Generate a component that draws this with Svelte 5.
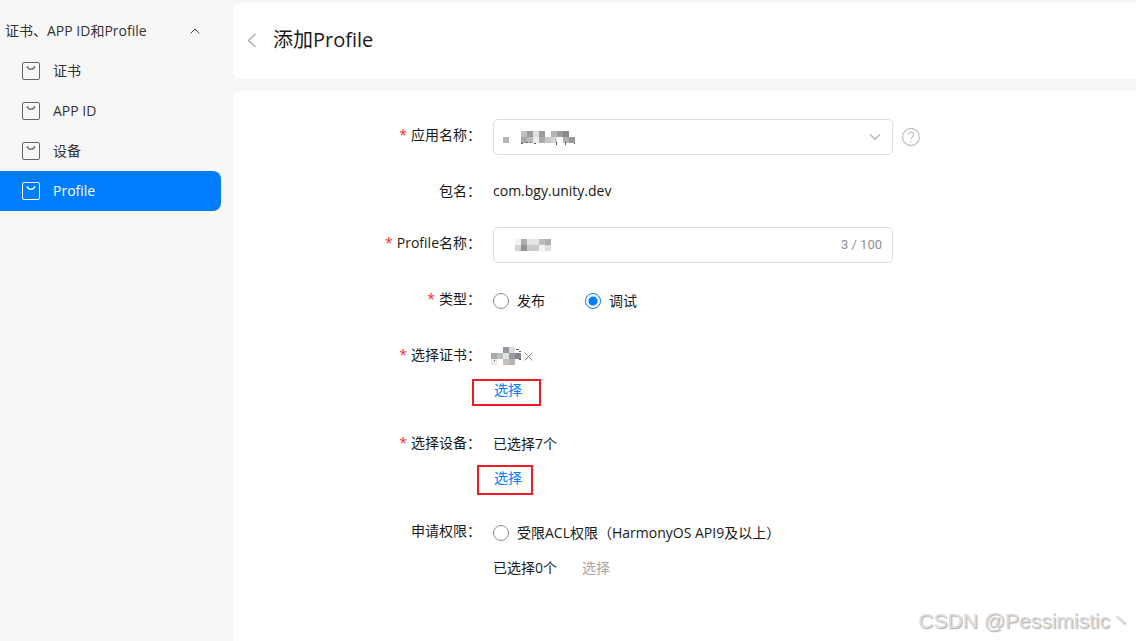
<script>
  const navItems = ['证书', 'APP ID', '设备', 'Profile'];
  let active = $state('Profile');
  let open = $state(true);

  let type = $state('debug');
  let profileName = $state('');
  let certVisible = $state(true);

  // masked values: [x, y, shade], one cell is 6px
  const appMask = [
    [0, 1, '#b8b8b8'],
    [3, 0, '#c0c0c0'], [4, 0, '#9a9a9a'], [5, 0, '#dedede'], [6, 0, '#9a9a9a'],
    [8, 0, '#b5b5b5'], [9, 0, '#9c9c9c'], [10, 0, '#888888'],
    [3, 1, '#a6a6a6'], [4, 1, '#b9b9b9'], [5, 1, '#ebebeb'], [6, 1, '#a9a9a9'],
    [7, 1, '#c8c8c8'], [8, 1, '#d2d2d2'], [10, 1, '#b0b0b0'], [11, 1, '#9a9a9a'],
  ];
  const nameMask = [
    [0, 0, '#f3f3f3'], [1, 0, '#adadad'], [2, 0, '#e6e6e6'], [3, 0, '#e6e6e6'],
    [4, 0, '#bcbcbc'], [5, 0, '#adadad'],
    [0, 1, '#d3d3d3'], [1, 1, '#939393'], [2, 1, '#c9c9c9'], [3, 1, '#cccccc'],
    [4, 1, '#f3f3f3'], [5, 1, '#dedede'],
  ];
  const certMask = [
    [0, 1, '#a9a9a9'], [1, 1, '#bcbcbc'], [2, 1, '#d5e5e0'], [3, 1, '#a096a6'], [4, 1, '#858585'],
    [2, 0, '#9c92a4'], [3, 0, '#d9dedb'],
    [0, 2, '#f1e8e8'], [2, 2, '#c9beb8'], [3, 2, '#b3b3b3'],
  ];

  // bits of the text that stick out of the mask: [x, y, w, h]
  const appBits = [
    [18, 12, 2, 1], [23, 11, 2, 1], [27, 11, 1, 1], [31, 12, 2, 1],
    [53, 11, 1, 3], [62, 11, 1, 3], [71, 12, 1, 1],
  ];
  const certBits = [[3, 13, 1, 1], [25, 2, 3, 1], [28, 4, 2, 1], [28, 12, 2, 1]];
</script>

{#snippet mask(cells, cols, rows, bits = [])}
  <svg class="mask" width={cols * 6} height={rows * 6} shape-rendering="crispEdges" aria-hidden="true">
    {#each cells as [x, y, fill]}
      <rect x={x * 6} y={y * 6} width="6" height="6" {fill} />
    {/each}
    {#each bits as [x, y, width, height]}
      <rect {x} {y} {width} {height} fill="#555" />
    {/each}
  </svg>
{/snippet}

<div class="page">
  <aside class="sidebar">
    <button class="group" type="button" aria-expanded={open} onclick={() => (open = !open)}>
      <span>证书、APP ID和Profile</span>
      <svg class:closed={!open} width="12" height="8" viewBox="0 0 12 8" fill="none" stroke="#444">
        <path d="M1.5 6.5 6 2l4.500 4.500" />
      </svg>
    </button>
    {#if open}
      <nav>
        {#each navItems as item}
          <a href="#{item}" class="nav-item" class:active={active === item} onclick={() => (active = item)}>
            <svg width="18" height="18" viewBox="0 0 18 18" fill="none" stroke="currentColor">
              <rect x="0.500" y="0.500" width="17" height="17" rx="1.500" />
              <path d="M5 4.200C5.700 6 7.200 7.300 9 7.300S12.300 6 13 4.200" stroke-width="1.300" />
            </svg>
            <span>{item}</span>
          </a>
        {/each}
      </nav>
    {/if}
  </aside>

  <main>
    <header class="panel title-bar">
      <button class="back" type="button" aria-label="返回">
        <svg width="10" height="16" viewBox="0 0 10 16" fill="none" stroke="#a8a8a8" stroke-width="1.300">
          <path d="M8.500 1 1.500 7.500l7 6.500" />
        </svg>
      </button>
      <h1>添加Profile</h1>
    </header>

    <form class="panel form" onsubmit={(e) => e.preventDefault()}>
      <div class="row">
        <label class="label required" for="app">应用名称：</label>
        <div class="field">
          <div class="control">
            <select id="app"><option></option></select>
            <span class="app-value">{@render mask(appMask, 12, 2, appBits)}</span>
            <svg class="arrow" width="12" height="8" viewBox="0 0 12 8" fill="none" stroke="#b0b1b8" stroke-width="1.200">
              <path d="M1 1.500 6 6.300l5-4.800" />
            </svg>
          </div>
          <button class="help" type="button" aria-label="帮助">
            <svg width="20" height="20" viewBox="0 0 20 20" fill="none" stroke="#c6c6c6" stroke-width="1.300">
              <circle cx="10" cy="10" r="8.500" />
              <path d="M7.300 7.800a2.700 2.700 0 1 1 4.300 2.100c-1 .8-1.600 1.200-1.600 2.500" />
              <path d="M10 13.900v1.400" />
            </svg>
          </button>
        </div>
      </div>

      <div class="row">
        <span class="label">包名：</span>
        <div class="package">com.bgy.unity.dev</div>
      </div>

      <div class="row">
        <label class="label required" for="profile-name">Profile名称：</label>
        <div class="field">
          <div class="control">
            <input id="profile-name" type="text" maxlength="100" bind:value={profileName} />
            <span class="name-value">{@render mask(nameMask, 6, 2)}</span>
            <span class="count">3 / 100</span>
          </div>
        </div>
      </div>

      <div class="row" role="radiogroup" aria-labelledby="type-label">
        <span class="label required" id="type-label">类型：</span>
        <div class="field radios">
          <label class="radio"><input type="radio" name="type" value="release" bind:group={type} />发布</label>
          <label class="radio"><input type="radio" name="type" value="debug" bind:group={type} />调试</label>
        </div>
      </div>

      <div class="row">
        <span class="label required">选择证书：</span>
        <div>
          <div class="line tag">
            {#if certVisible}
              {@render mask(certMask, 5, 3, certBits)}
              <button class="remove" type="button" aria-label="移除" onclick={() => (certVisible = false)}>
                <svg width="9" height="9" viewBox="0 0 9 9" stroke="#8f9096">
                  <path d="M.5.5l8 8M8.500.5l-8 8" />
                </svg>
              </button>
            {/if}
          </div>
          <div class="line">
            <button class="link marked cert" type="button">选择</button>
          </div>
        </div>
      </div>

      <div class="row">
        <span class="label required">选择设备：</span>
        <div>
          <div class="line">已选择7个</div>
          <div class="line">
            <button class="link marked device" type="button">选择</button>
          </div>
        </div>
      </div>

      <div class="row">
        <span class="label">申请权限：</span>
        <div>
          <div class="field">
            <label class="radio"><input type="radio" name="acl" value="acl" />受限ACL权限（HarmonyOS API9及以上）</label>
          </div>
          <div class="line picked">
            <span>已选择0个</span>
            <button class="link" type="button" disabled>选择</button>
          </div>
        </div>
      </div>
    </form>
  </main>

  <div class="watermark">CSDN @Pessimistic丶</div>
</div>

<style>
  :global(body) {
    margin: 0;
    background: #f7f7f7;
  }

  .page {
    display: flex;
    gap: 12px;
    position: relative;
    min-height: 100vh;
    box-sizing: border-box;
    padding-top: 3px;
    color: #191919;
    font-family: 'Open Sans', 'Noto Sans CJK SC', sans-serif;
    font-size: 14px;
    line-height: 20px;
  }

  button,
  input,
  select {
    font: inherit;
    color: inherit;
  }

  button {
    padding: 0;
    border: 0;
    background: none;
    cursor: pointer;
  }

  svg {
    display: block;
    flex: none;
  }

  .sidebar {
    flex: none;
    width: 221px;
    padding-top: 8px;
    box-sizing: border-box;
    color: #333;
  }

  .group {
    display: flex;
    align-items: center;
    justify-content: space-between;
    width: 100%;
    height: 40px;
    padding: 0 20px 0 5px;
  }

  .closed {
    transform: rotate(180deg);
  }

  .nav-item {
    display: flex;
    align-items: center;
    gap: 13px;
    height: 40px;
    padding-left: 22px;
    border-radius: 0 8px 8px 0;
    color: #333;
    text-decoration: none;
  }

  .nav-item svg {
    color: #666;
  }

  .nav-item.active,
  .nav-item.active svg {
    color: #fff;
  }

  .nav-item.active {
    background: #007dff;
  }

  main {
    display: flex;
    flex: 1;
    flex-direction: column;
    gap: 12px;
    min-width: 0;
  }

  .panel {
    background: #fff;
    border-radius: 8px 0 0 8px;
  }

  .title-bar {
    display: flex;
    align-items: center;
    gap: 16px;
    height: 76px;
    padding-left: 14px;
  }

  h1 {
    margin: 0;
    padding-bottom: 2px;
    font-size: 20px;
    font-weight: 400;
    line-height: 28px;
  }

  .form {
    display: flex;
    flex: 1;
    flex-direction: column;
    gap: 20px;
    padding: 28px 20px 28px 0;
    border-bottom-left-radius: 0;
  }

  .row {
    display: grid;
    grid-template-columns: 248px 1fr;
    column-gap: 12px;
  }

  .label {
    line-height: 32px;
    text-align: right;
    white-space: nowrap;
  }

  .package {
    line-height: 32px;
  }

  .required::before {
    content: '*';
    margin-right: 4px;
    color: #fa2a2d;
  }

  .field {
    display: flex;
    align-items: center;
    min-height: 36px;
  }

  .control {
    position: relative;
    width: 100%;
    max-width: 400px;
  }

  .control select,
  .control input {
    display: block;
    width: 100%;
    height: 36px;
    box-sizing: border-box;
    padding: 0 12px;
    border: 1px solid #dcdce4;
    border-radius: 5px;
    background: #fff;
    appearance: none;
    outline: none;
  }

  .mask {
    overflow: visible;
  }

  .app-value,
  .name-value,
  .arrow,
  .count {
    position: absolute;
    pointer-events: none;
  }

  .app-value {
    top: 12px;
    left: 10px;
  }

  .name-value {
    top: 12px;
    left: 22px;
  }

  .arrow {
    top: 14px;
    right: 12px;
  }

  .count {
    top: 0;
    right: 11px;
    color: #8f9096;
    font-family: Roboto, sans-serif;
    font-size: 13px;
    line-height: 36px;
  }

  .help {
    margin-left: 8px;
  }

  .radios {
    gap: 40px;
  }

  .radio {
    display: flex;
    align-items: center;
    gap: 8px;
  }

  .radio input {
    width: 16px;
    height: 16px;
    margin: 0;
    border: 1px solid #8f9096;
    border-radius: 50%;
    appearance: none;
  }

  .radio input:checked {
    border-color: #007dff;
    background: radial-gradient(circle, #007dff 4px, #fff 5px);
  }

  .line {
    display: flex;
    align-items: center;
    height: 34px;
  }

  .tag {
    gap: 3px;
    margin-left: -2px;
  }

  .link {
    position: relative;
    padding: 0 1px;
    color: #007dff;
  }

  .link:disabled {
    color: #a6a6a6;
    cursor: default;
  }

  .marked::after {
    content: '';
    position: absolute;
    border: 2px solid #ed1c24;
    pointer-events: none;
  }

  .cert::after {
    inset: -1px -18px -6px -21px;
  }

  .device::after {
    inset: -3px -10px -7px -16px;
  }

  .picked {
    gap: 24px;
  }

  .watermark {
    position: absolute;
    right: 5px;
    bottom: 8px;
    color: #ddd;
    font-family: 'Liberation Sans', 'Noto Sans CJK SC', sans-serif;
    font-size: 21px;
    line-height: 24px;
    text-shadow: 1px 1px 1px #aaa;
    pointer-events: none;
  }
</style>
